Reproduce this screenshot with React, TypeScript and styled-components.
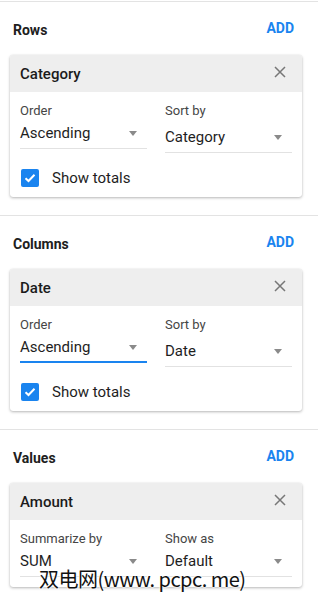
import React from "react";
import styled, { createGlobalStyle } from "styled-components";

const GlobalStyle = createGlobalStyle`
  body {
    margin: 0;
    background: #fff;
    font-family: Roboto, "Liberation Sans", Arial, sans-serif;
    color: #212121;
  }
`;

const Panel = styled.div`
  position: relative;
  width: 318px;
  padding-top: 1px;
`;

const Section = styled.section`
  border-top: 1px solid #e3e3e3;
  padding: 0 0 18px 10px;
`;

const SectionHeader = styled.div`
  display: flex;
  align-items: center;
  justify-content: space-between;
  height: 53px;
  padding: 0 24px 2px 3px;
  box-sizing: border-box;
`;

const SectionTitle = styled.h2`
  margin: 0;
  font-size: 14px;
  font-weight: 700;
  color: #202020;
  padding-top: 4px;
`;

const AddButton = styled.button`
  border: none;
  background: none;
  padding: 0;
  font-family: inherit;
  font-size: 14px;
  font-weight: 700;
  color: #1a84ef;
  cursor: pointer;
`;

const Card = styled.div`
  width: 292px;
  background: #fff;
  border-radius: 3px;
  box-shadow: 0 1px 3px rgba(0, 0, 0, 0.28), 0 0 1px rgba(0, 0, 0, 0.12);
  overflow: hidden;
`;

const CardHeader = styled.div`
  display: flex;
  align-items: center;
  justify-content: space-between;
  height: 37px;
  padding: 0 16px 0 10px;
  background: #eeeeee;
  font-size: 15px;
  font-weight: 500;
  color: #1b1b1b;
`;

const CloseIcon = styled.svg`
  width: 12px;
  height: 12px;
  margin-top: -3px;
`;

const CardBody = styled.div`
  padding: 11px 10px 10px;
`;

const Fields = styled.div`
  display: grid;
  grid-template-columns: 127px 127px;
  column-gap: 18px;
`;

const Field = styled.div``;

const Label = styled.div`
  font-size: 13px;
  line-height: 15px;
  color: #454545;
`;

const Select = styled.div<{ $offset: number; $focused?: boolean }>`
  display: flex;
  align-items: center;
  justify-content: space-between;
  margin-top: ${(p) => 5 + p.$offset}px;
  height: 20px;
  padding-right: 10px;
  font-size: 15px;
  color: #1e1e1e;
  border-bottom: ${(p) => (p.$focused ? "2px solid #1a84ef" : "1px solid #e2e2e2")};
  padding-bottom: ${(p) => (p.$focused ? 4 : 5)}px;
`;

const Arrow = styled.span`
  width: 0;
  height: 0;
  border-left: 4.5px solid transparent;
  border-right: 4.5px solid transparent;
  border-top: 5px solid #8a8a8a;
`;

const CheckRow = styled.label`
  display: flex;
  align-items: center;
  gap: 13px;
  margin-top: 16px;
  padding-left: 1px;
  font-size: 15px;
  line-height: 18px;
  color: #1e1e1e;
`;

const CheckBox = styled.span`
  display: flex;
  align-items: center;
  justify-content: center;
  width: 18px;
  height: 18px;
  border-radius: 2px;
  background: #1a84ef;
`;

const Watermark = styled.div`
  position: absolute;
  left: 39px;
  top: 564px;
  font-family: "Noto Sans CJK SC", "DejaVu Sans", sans-serif;
  font-size: 20px;
  color: #111;
  letter-spacing: -0.5px;
  text-shadow: 0 0 2px #fff, 0 0 2px #fff, 0 0 2px #fff;
  white-space: nowrap;
`;

type FieldDef = { label: string; value: string; offset: number; focused?: boolean };

type Group = {
  title: string;
  item: string;
  fields: FieldDef[];
  totals: boolean;
};

const groups: Group[] = [
  {
    title: "Rows",
    item: "Category",
    fields: [
      { label: "Order", value: "Ascending", offset: 0 },
      { label: "Sort by", value: "Category", offset: 4 },
    ],
    totals: true,
  },
  {
    title: "Columns",
    item: "Date",
    fields: [
      { label: "Order", value: "Ascending", offset: 0, focused: true },
      { label: "Sort by", value: "Date", offset: 4 },
    ],
    totals: true,
  },
  {
    title: "Values",
    item: "Amount",
    fields: [
      { label: "Summarize by", value: "SUM", offset: 0 },
      { label: "Show as", value: "Default", offset: 0 },
    ],
    totals: false,
  },
];

function PivotSection({ group }: { group: Group }) {
  return (
    <Section>
      <SectionHeader>
        <SectionTitle>{group.title}</SectionTitle>
        <AddButton>ADD</AddButton>
      </SectionHeader>
      <Card>
        <CardHeader>
          <span>{group.item}</span>
          <CloseIcon viewBox="0 0 12 12">
            <path d="M1 1L11 11M11 1L1 11" stroke="#777" strokeWidth="1.5" />
          </CloseIcon>
        </CardHeader>
        <CardBody>
          <Fields>
            {group.fields.map((f) => (
              <Field key={f.label}>
                <Label>{f.label}</Label>
                <Select $offset={f.offset} $focused={f.focused}>
                  <span>{f.value}</span>
                  <Arrow />
                </Select>
              </Field>
            ))}
          </Fields>
          {group.totals && (
            <CheckRow>
              <CheckBox>
                <svg width="14" height="14" viewBox="0 0 14 14">
                  <path d="M2.5 7.2L5.5 10L11.5 3.8" stroke="#fff" strokeWidth="2" fill="none" />
                </svg>
              </CheckBox>
              Show totals
            </CheckRow>
          )}
        </CardBody>
      </Card>
    </Section>
  );
}

export default function App() {
  return (
    <Panel>
      <GlobalStyle />
      {groups.map((g) => (
        <PivotSection key={g.title} group={g} />
      ))}
      <Watermark>双电网(www. pcpc. me)</Watermark>
    </Panel>
  );
}
